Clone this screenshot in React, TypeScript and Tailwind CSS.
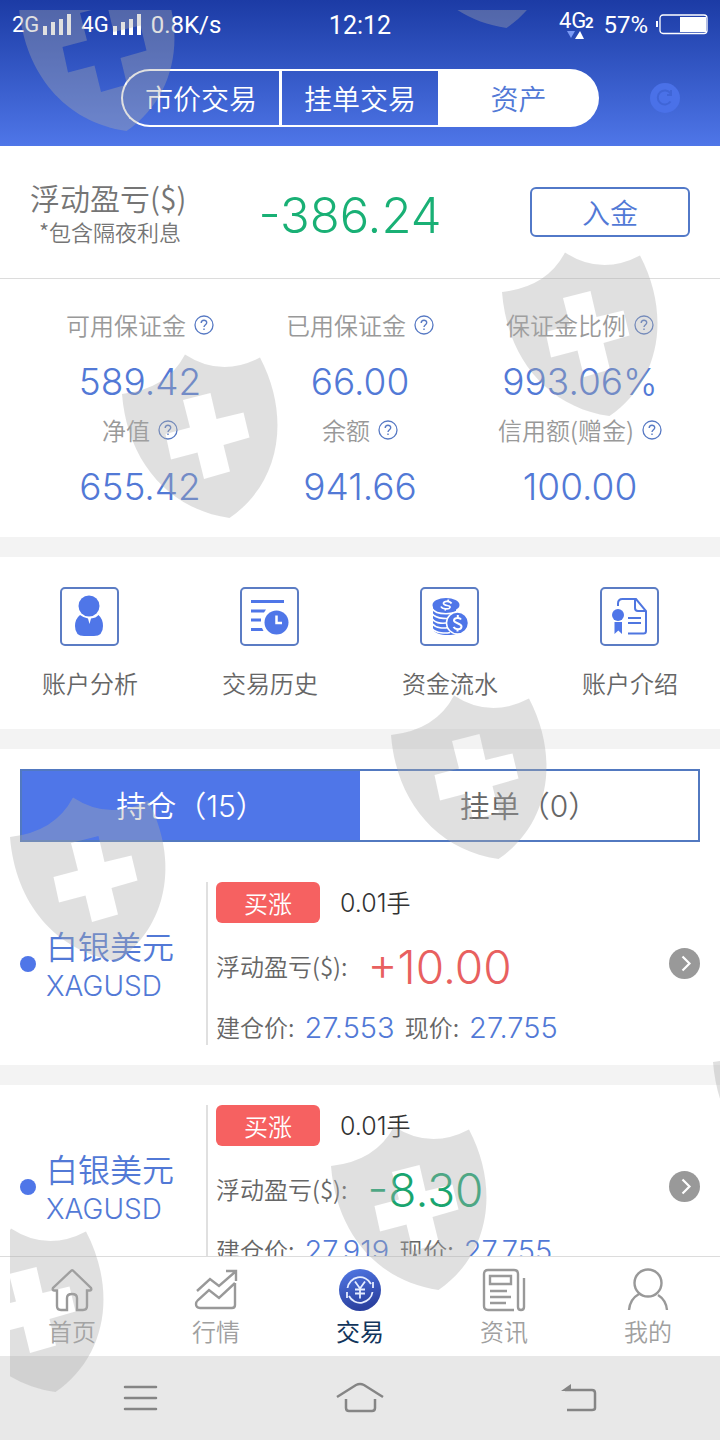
import type { ReactNode } from "react";

const SHIELD_ORIGINS = [
  [19, -33],
  [399, -136],
  [502, 252],
  [122, 354],
  [391, 695],
  [10, 797],
  [713, 1022],
  [331, 1126],
  [-52, 1228],
];

function Watermark() {
  return (
    <svg className="pointer-events-none absolute inset-0 h-full w-full" aria-hidden="true">
      <defs>
        <clipPath id="watermark-area">
          <rect x="10" y="10" width="100%" height="100%" />
        </clipPath>
      </defs>
      <g clipPath="url(#watermark-area)" fill="#aaaaaa" fillOpacity="0.37" fillRule="evenodd">
        {SHIELD_ORIGINS.map(([x, y]) => (
          <path
            key={`${x},${y}`}
            transform={`translate(${x} ${y})`}
            d="M63 .5Q99 24 138 3.5C170 65 157 130 107.500 164C45 155 5 105 0 40Q45 35 63 .5ZM61 46L88.500 39L94.500 65L121.500 58.500L127.500 83.500L101.500 91L108 117.500L82 125L75.500 98.500L49 105.500L43.500 80L68 73.500Z"
          />
        ))}
      </g>
    </svg>
  );
}

function SignalBars() {
  return (
    <svg className="h-6 w-7" viewBox="0 0 28 24" fill="#fff" aria-hidden="true">
      <path d="M0 13h4v9h-4zM8 9h4v13h-4zM16 6h4v16h-4zM24 1h4v21h-4z" />
    </svg>
  );
}

function StatusBar() {
  return (
    <div className="grid h-[50px] grid-cols-[1fr_auto_1fr] items-center px-3 font-['Roboto',sans-serif] text-2xl font-normal text-white">
      <div className="flex items-center gap-2.5 whitespace-nowrap">
        <div className="flex items-center gap-1 text-[22px]">
          2G
          <SignalBars />
        </div>
        <div className="flex items-center gap-1 text-[22px]">
          4G
          <SignalBars />
        </div>
        <span>0.8K/s</span>
      </div>
      <div className="pt-0.5 text-[25px] leading-8">12:12</div>
      <div className="flex items-center justify-end gap-2">
        <svg className="h-8 w-9" viewBox="0 0 36 32" fill="#fff" aria-hidden="true">
          <text x="0" y="19" fontSize="22">4G</text>
          <text x="26" y="19" fontSize="15" fontWeight="700">2</text>
          <path d="M8 22h8l-4 7z" fill="#7b9af5" />
          <path d="M16 30h9l-4-8z" />
        </svg>
        <span>57%</span>
        <svg className="h-6 w-[52px]" viewBox="0 0 52 24" fill="none" aria-hidden="true">
          <path d="M1 8v6" stroke="#fff" strokeWidth="2" />
          <rect x="4" y="2" width="47" height="18.500" rx="3" stroke="#fff" strokeWidth="1.300" />
          <rect x="24" y="4" width="26" height="15" fill="#fff" />
        </svg>
      </div>
    </div>
  );
}

function Header() {
  return (
    <header className="flex h-[146px] flex-col bg-linear-to-b from-[#1c3ba5] to-[#4f76e8]">
      <StatusBar />
      <div className="grid flex-1 grid-cols-[121fr_478fr_121fr] pt-[19px]">
        <div className="col-start-2 grid h-[58px] grid-cols-[158fr_159fr_161fr] text-[28px] leading-8 text-white">
          <button className="rounded-l-full border-y-2 border-l-2 border-white">市价交易</button>
          <button className="border-y-2 border-l-[3px] border-white">挂单交易</button>
          <button className="rounded-r-full bg-white text-[#5279d6]">资产</button>
        </div>
        <button aria-label="刷新" className="mt-3.5 ml-[51px] size-[30px]">
          <svg viewBox="0 0 30 30" fill="none" aria-hidden="true">
            <circle cx="15" cy="15" r="15" fill="#4a71e8" />
            <path d="M20.500 18.500A7 7 0 1 1 20.500 10.500M21 7v5h-4" stroke="#3f65d6" strokeWidth="2" />
          </svg>
        </button>
      </div>
    </header>
  );
}

function HelpIcon() {
  return (
    <svg className="size-5" viewBox="0 0 20 20" fill="none" stroke="#587ac4" aria-hidden="true">
      <circle cx="10" cy="10" r="9" strokeWidth="1.300" />
      <path d="M7.200 8C7.200 4.300 12.800 4.500 12.700 7.700C12.700 9.700 10 9.700 10 12M10 13.500v1.600" strokeWidth="1.400" />
    </svg>
  );
}

const METRICS = [
  ["可用保证金", "589.42"],
  ["已用保证金", "66.00"],
  ["保证金比例", "993.06%"],
  ["净值", "655.42"],
  ["余额", "941.66"],
  ["信用额(赠金)", "100.00"],
];

function Summary() {
  return (
    <>
      <section className="grid h-[133px] shrink-0 grid-cols-[160px_1fr_160px] items-center border-b border-[#dcdcdc] px-[30px]">
        <div className="pt-0.5 text-[#757575]">
          <h1 className="text-[30px] leading-9 whitespace-nowrap">浮动盈亏($)</h1>
          <p className="text-center text-[22px] leading-8">*包含隔夜利息</p>
        </div>
        <strong className="pt-1.5 pr-5 text-center font-['Inter',sans-serif] text-[49px] leading-none font-light text-[#19b075]">
          -386.24
        </strong>
        <button className="h-[50px] rounded-md border-2 border-[#5279c8] text-[28px] leading-8 text-[#5279d6]">入金</button>
      </section>
      <section className="grid h-[258px] shrink-0 grid-cols-3 content-start gap-y-1 px-[30px] pt-7">
        {METRICS.map(([label, value]) => (
          <div key={label} className="flex flex-col items-center gap-3">
            <div className="flex items-center gap-2 text-2xl leading-9 text-[#999]">
              {label}
              <HelpIcon />
            </div>
            <div className="font-['Inter',sans-serif] text-[37px] leading-[53px] text-[#5279d6]">{value}</div>
          </div>
        ))}
      </section>
    </>
  );
}

function Separator() {
  return <div className="h-5 shrink-0 bg-[#f3f3f3]" />;
}

function AnalysisIcon() {
  return (
    <>
      <circle cx="29" cy="19" r="10.500" />
      <path d="M20 28Q24 31 28 31.500L29.500 37L31 31.500Q36 31 38.500 28Q43 32 43 39Q43 49 34 49H24Q15 49 15 39Q15 32 20 28Z" />
    </>
  );
}

function HistoryIcon() {
  return (
    <>
      <path d="M11 13h33v3H11zM11 22.500h15l-2 3H11zM11 31.500h10v3H11zM11 41h11l1.500 3H11z" />
      <circle cx="36.500" cy="35.500" r="12" />
      <path d="M36.500 28.500v7.500H42" fill="none" stroke="#fff" strokeWidth="2.500" />
    </>
  );
}

function FundsIcon() {
  return (
    <>
      <path d="M13 18v23c0 8 18 8 23 6V18z" />
      <ellipse cx="26" cy="18" rx="13.500" ry="7" />
      <path
        d="M12 21.500c4 7 24 7 28 0M12 26.500c4 6 18 6 24 3M12 31.500c4 6 13 5 17 4M12 36.500c4 5 12 5 16 4M12 41.500c4 5 14 5 18 4"
        fill="none"
        stroke="#fff"
        strokeWidth="1.600"
      />
      <circle cx="37.500" cy="36" r="11" stroke="#fff" strokeWidth="1.500" />
      <path
        d="M41 32.500C39.500 30 34 30.500 34 33.500S41.500 36 41.500 39.500S35.500 43 33.500 40M37.800 28v3M37.500 41.500v3"
        fill="none"
        stroke="#fff"
        strokeWidth="2"
      />
      <path
        d="M31.500 16.500C30 13.500 23 14 23.500 16.500S31 18 30 20.500S22 22 21 19.500M28.500 12.500l-.5 2.500M25.500 21.500l-.5 2"
        fill="none"
        stroke="#fff"
        strokeWidth="1.700"
      />
    </>
  );
}

function IntroIcon() {
  return (
    <>
      <path
        d="M18 19v-2.500q0-4.500 4.500-4.500H36l10 12v20q0 2.500-2.500 2.500H28M35 12v9q0 3 3 3h8M28 31h13M28 36h13"
        fill="none"
        stroke="#4f76e0"
        strokeWidth="2"
      />
      <circle cx="18" cy="28" r="6" />
      <path d="M14.500 35h7.500v12l-3.700-3.500L14.500 47z" />
    </>
  );
}

const SHORTCUTS: [string, ReactNode][] = [
  ["账户分析", <AnalysisIcon />],
  ["交易历史", <HistoryIcon />],
  ["资金流水", <FundsIcon />],
  ["账户介绍", <IntroIcon />],
];

function Shortcuts() {
  return (
    <section className="grid h-[172px] shrink-0 grid-cols-4 pt-[30px]">
      {SHORTCUTS.map(([label, icon]) => (
        <button key={label} className="flex flex-col items-center gap-[18px] text-2xl leading-9 text-[#666]">
          <svg className="size-[60px]" viewBox="0 0 60 60" fill="#4f76e8" aria-hidden="true">
            <rect x="1" y="1" width="57" height="57" rx="4" fill="none" stroke="#5b7cc4" strokeWidth="2" />
            {icon}
          </svg>
          {label}
        </button>
      ))}
    </section>
  );
}

interface Position {
  lots: string;
  profit: string;
  open: string;
  current: string;
}

const POSITIONS: Position[] = [
  { lots: "0.01", profit: "+10.00", open: "27.553", current: "27.755" },
  { lots: "0.01", profit: "-8.30", open: "27.919", current: "27.755" },
];

function PositionRow({ lots, profit, open, current }: Position) {
  const profitColor = profit.startsWith("+") ? "text-[#e8605f]" : "text-[#19a56f]";
  return (
    <article className="flex h-[203px] shrink-0 items-center p-5">
      <span className="mr-2.5 size-4 shrink-0 rounded-full bg-[#4f76e8]" />
      <div className="w-40 shrink-0 pt-1 text-[#5279d6]">
        <h2 className="text-[32px] leading-10">白银美元</h2>
        <div className="font-['Inter',sans-serif] text-[28px] leading-[42px]">XAGUSD</div>
      </div>
      <div className="flex h-[163px] flex-1 flex-col justify-between border-l-2 border-[#e0e0e0] pl-2 text-2xl text-[#666]">
        <div className="flex items-center gap-5">
          <span className="flex h-[41px] w-[104px] items-center justify-center rounded-md bg-[#f66161] text-white">买涨</span>
          <span className="leading-9 text-[#333]">
            <span className="font-['Inter',sans-serif] text-[25px]">{lots}</span>手
          </span>
        </div>
        <div className="flex h-11 items-center gap-5">
          <span>浮动盈亏($):</span>
          <span className={`pt-0.5 font-['Inter',sans-serif] text-[46px] leading-none ${profitColor}`}>{profit}</span>
        </div>
        <div className="flex h-9 items-center gap-2.5 whitespace-nowrap">
          <span>建仓价:</span>
          <span className="pt-0.5 font-['Inter',sans-serif] text-[29px] text-[#5279d6]">{open}</span>
          <span>现价:</span>
          <span className="pt-0.5 font-['Inter',sans-serif] text-[29px] text-[#5279d6]">{current}</span>
        </div>
      </div>
      <button aria-label="详情" className="size-[31px] shrink-0">
        <svg viewBox="0 0 31 31" fill="none" aria-hidden="true">
          <circle cx="15.500" cy="15.500" r="15.500" fill="#999" />
          <path d="M13.500 8.500l7 7-7 7" stroke="#fff" strokeWidth="2.200" />
        </svg>
      </button>
    </article>
  );
}

function Positions() {
  return (
    <>
      <div className="shrink-0 p-5">
        <div className="grid h-[73px] grid-cols-2 border-2 border-[#5279c0] text-[30px]">
          <button className="bg-[#4f76e8] text-white">
            持仓（<span className="font-['Inter',sans-serif]">15</span>）
          </button>
          <button className="text-[#666]">
            挂单（<span className="font-['Inter',sans-serif]">0</span>）
          </button>
        </div>
      </div>
      <PositionRow {...POSITIONS[0]} />
      <Separator />
      <PositionRow {...POSITIONS[1]} />
    </>
  );
}

function HomeIcon() {
  return (
    <path d="M20.500 1.500L2 19q-1 2.500 1.500 2.500H6V37q0 4 4 4h6V29q0-4 5-4t5 4v12h6q4 0 4-4V21.500h2.500Q41 21.500 40 19L23 2.500Q21.500 .8 20.500 1.500Z" />
  );
}

function QuotesIcon() {
  return (
    <path d="M2 22L15 10L24 17L40 3M31 2H41V12M40 14V36Q40 39 37 39H5Q1 39 1 35Q1 33 3 31L14 21L24 29L40 14" />
  );
}

function TradeIcon() {
  return (
    <>
      <defs>
        <linearGradient id="trade-fill" x1="0" y1="0" x2="0.3" y2="1">
          <stop offset="0" stopColor="#5279e6" />
          <stop offset="1" stopColor="#2b41a0" />
        </linearGradient>
      </defs>
      <circle cx="21" cy="21" r="21" fill="url(#trade-fill)" stroke="none" />
      <g stroke="#e6edff" strokeWidth="1.800">
        <path d="M8.500 19A12.500 12.500 0 0 1 32 15M33.500 23A12.500 12.500 0 0 1 10 27M34 13v6M8 29v-6" />
        <path d="M16 12.500l5 7 5-7M21 19.500v10M16 20.500h10M16 24.500h10" />
      </g>
    </>
  );
}

function NewsIcon() {
  return (
    <path d="M31 41H5Q1 41 1 37V5Q1 1 5 1H31Q35 1 35 5V38Q35 41 38 41Q41 41 41 38V9M7 7H28V15H7ZM7 22H24M7 28H28M7 34H23" />
  );
}

function ProfileIcon() {
  return (
    <>
      <circle cx="21" cy="14" r="13.500" />
      <path d="M2 41Q3 30 12 25M31 26Q39 31 40 41" />
    </>
  );
}

const TABS: [string, ReactNode][] = [
  ["首页", <HomeIcon />],
  ["行情", <QuotesIcon />],
  ["交易", <TradeIcon />],
  ["资讯", <NewsIcon />],
  ["我的", <ProfileIcon />],
];

function TabBar() {
  return (
    <nav className="grid h-[100px] shrink-0 grid-cols-5 border-t border-[#dcdcdc] bg-white">
      {TABS.map(([label, icon]) => (
        <a
          key={label}
          href="#"
          className={`flex flex-col items-center gap-0.5 pt-3 text-2xl leading-9 ${label === "交易" ? "font-normal text-[#12355c]" : "text-[#a0a0a0]"}`}
        >
          <svg className="size-[42px] overflow-visible" viewBox="0 0 42 42" fill="none" stroke="#999" strokeWidth="2.400" aria-hidden="true">
            {icon}
          </svg>
          {label}
        </a>
      ))}
    </nav>
  );
}

function SystemNav() {
  return (
    <div className="flex h-[84px] shrink-0 items-center bg-[#e8e8e8] px-[30px]">
      <button aria-label="菜单" className="flex flex-1 justify-center">
        <svg className="h-8 w-12" viewBox="0 0 48 32" fill="none" stroke="#858585" strokeWidth="2.500" strokeLinecap="round" aria-hidden="true">
          <path d="M9 5h31M9 16h31M9 27h31" />
        </svg>
      </button>
      <button aria-label="主屏幕" className="flex flex-1 justify-center">
        <svg className="h-8 w-12" viewBox="0 0 48 32" fill="none" stroke="#858585" strokeWidth="2.500" aria-hidden="true">
          <path d="M1 15L20 3q4-2 8 0L47 15M10 17v9q0 3 3 3h23q3 0 3-3v-9" />
        </svg>
      </button>
      <button aria-label="返回" className="flex flex-1 justify-center">
        <svg className="h-8 w-12" viewBox="0 0 48 32" fill="none" stroke="#858585" strokeWidth="2.500" aria-hidden="true">
          <path d="M9 8h27q3 0 3 3v15q0 2-3 2H11" />
          <path d="M5 9l10-7v7z" fill="#858585" stroke="none" />
        </svg>
      </button>
    </div>
  );
}

export default function App() {
  return (
    <div className="relative flex h-screen flex-col overflow-hidden bg-white font-['Noto_Sans_CJK_SC',sans-serif] font-[350]">
      <Header />
      <main className="flex min-h-0 flex-1 flex-col overflow-hidden">
        <Summary />
        <Separator />
        <Shortcuts />
        <Separator />
        <Positions />
      </main>
      <TabBar />
      <SystemNav />
      <Watermark />
    </div>
  );
}
